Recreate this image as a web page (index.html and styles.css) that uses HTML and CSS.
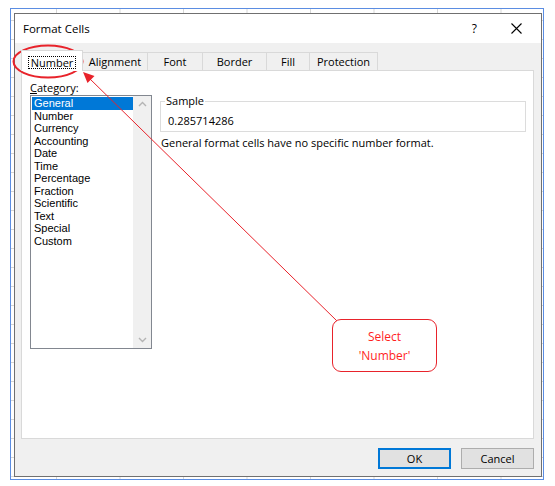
FILE: index.html
```html
<!DOCTYPE html>
<html>
<head>
<meta charset="utf-8">
<link rel="stylesheet" href="styles.css">
</head>
<body>
<div class="frame">
  <div class="dialog">
    <div class="titlebar">
      <span class="title">Format Cells</span>
      <span class="help">?</span>
      <svg class="close" width="11" height="11" viewBox="0 0 11 11"><path d="M0.5 0.5L10.5 10.5M10.5 0.5L0.5 10.5" stroke="#000" stroke-width="1.1" fill="none"/></svg>
    </div>
    <div class="body">
      <div class="tabs">
        <div class="tab tab-number selected"><span class="focus">Number</span></div>
        <div class="tab tab-align">Alignment</div>
        <div class="tab tab-font">Font</div>
        <div class="tab tab-border">Border</div>
        <div class="tab tab-fill">Fill</div>
        <div class="tab tab-prot">Protection</div>
      </div>
      <div class="panel">
        <div class="left">
          <div class="cat-label"><u>C</u>ategory:</div>
          <div class="listbox">
            <ul class="items">
              <li class="sel">General</li>
              <li>Number</li>
              <li>Currency</li>
              <li>Accounting</li>
              <li>Date</li>
              <li>Time</li>
              <li>Percentage</li>
              <li>Fraction</li>
              <li>Scientific</li>
              <li>Text</li>
              <li>Special</li>
              <li>Custom</li>
            </ul>
            <div class="scroll">
              <svg class="arrow" width="17" height="17" viewBox="0 0 17 17"><path d="M5 10L8.5 6.5L12 10" stroke="#b4b4b4" stroke-width="1.4" fill="none"/></svg>
              <svg class="arrow" width="17" height="17" viewBox="0 0 17 17"><path d="M5 7L8.5 10.5L12 7" stroke="#b4b4b4" stroke-width="1.4" fill="none"/></svg>
            </div>
          </div>
        </div>
        <div class="right">
          <fieldset class="sample">
            <legend>Sample</legend>
            <div class="sample-val">0.285714286</div>
          </fieldset>
          <p class="desc">General format cells have no specific number format.</p>
        </div>
      </div>
      <div class="buttons">
        <button class="btn default">OK</button>
        <button class="btn">Cancel</button>
      </div>
    </div>
  </div>
</div>
<svg class="annot" width="555" height="486" viewBox="0 0 555 486">
  <ellipse cx="48" cy="61.5" rx="34.5" ry="16" fill="none" stroke="#e8232b" stroke-width="2"/>
  <line x1="337" y1="321" x2="88" y2="77" stroke="#e8232b" stroke-width="1"/>
  <polygon points="83,72 94.5,76 87.5,83" fill="#e8232b"/>
</svg>
<div class="callout">
  <span>Select</span>
  <span>'Number'</span>
</div>
</body>
</html>
```

FILE: styles.css
```css
html, body {
  margin: 0;
  padding: 0;
}
body {
  width: 555px;
  height: 486px;
  overflow: hidden;
  background: #ffffff;
  position: relative;
  padding: 8px 0 0 10px;
  box-sizing: border-box;
  font-family: "Open Sans", "Noto Sans", sans-serif;
  font-size: 11px;
  color: #000;
}
.frame {
  width: 534px;
  height: 472px;
  box-sizing: border-box;
  border: 1px solid #5b8de2;
  padding: 4px 0 0 3px;
  background-color: #ffffff;
  background-image:
    linear-gradient(to right, #d6d6d6 1px, transparent 1px),
    linear-gradient(to bottom, #d6d6d6 1px, transparent 1px);
  background-size: 63.5px 100%, 100% 19px;
  background-position: 45px 0, 0 11px;
}
.dialog {
  width: 528px;
  height: 464px;
  box-sizing: border-box;
  border: 1px solid #707070;
  display: flex;
  flex-direction: column;
  background: #f0f0f0;
}
.titlebar {
  height: 29px;
  flex: 0 0 auto;
  background: #ffffff;
  display: flex;
  align-items: center;
  padding: 0 19px 0 8px;
}
.title {
  font-size: 11.5px;
  line-height: 14px;
}
.help {
  margin-left: auto;
  font-size: 12px;
  line-height: 14px;
  margin-right: 34px;
}
.close {
  display: block;
}
.body {
  flex: 1 1 auto;
  padding: 7px 7px 0 6px;
  display: flex;
  flex-direction: column;
}
.tabs {
  display: flex;
  align-items: flex-end;
  height: 21px;
  margin-bottom: -1px;
}
.tab {
  height: 18px;
  margin-bottom: 1px;
  box-sizing: border-box;
  border: 1px solid #d9d9d9;
  border-bottom: none;
  border-left: none;
  background: #f0f0f0;
  display: flex;
  align-items: center;
  justify-content: center;
  line-height: 14px;
}
.tab.selected {
  height: 21px;
  margin-bottom: 0;
  background: #ffffff;
  border-left: 1px solid #d9d9d9;
  position: relative;
  z-index: 1;
  align-items: flex-start;
  padding-top: 5px;
}
.focus {
  border: 1px dotted #000;
  padding: 0 2px;
  line-height: 11px;
}
.tab-number { width: 62px; }
.tab-align { width: 65px; }
.tab-font { width: 55px; }
.tab-border { width: 64px; }
.tab-fill { width: 43px; }
.tab-prot { width: 68px; }
.panel {
  width: 513px;
  height: 369px;
  box-sizing: border-box;
  flex: 0 0 auto;
  background: #ffffff;
  border: 1px solid #d9d9d9;
  display: flex;
  padding: 9px 7px 0 8px;
}
.left {
  flex: 0 0 auto;
}
.cat-label {
  line-height: 15px;
}
.cat-label u {
  text-decoration: underline;
  text-underline-offset: 1px;
}
.listbox {
  width: 122px;
  height: 254px;
  box-sizing: border-box;
  border: 1px solid #828790;
  display: flex;
}
.items {
  list-style: none;
  margin: 0;
  padding: 1px 0 0 1px;
  flex: 1 1 auto;
  font-family: "Liberation Sans", Arial, sans-serif;
  font-size: 11px;
}
.items li {
  line-height: 12.5px;
  height: 12.5px;
  padding-left: 2px;
}
.items li.sel {
  background: #0078d7;
  color: #ffffff;
}
.scroll {
  width: 18px;
  background: #f0f0f0;
  display: flex;
  flex-direction: column;
  justify-content: space-between;
  align-items: center;
}
.arrow {
  display: block;
}
.right {
  flex: 1 1 auto;
  margin-left: 8px;
}
.sample {
  margin: 14px 0 0 0;
  border: 1px solid #dcdcdc;
  padding: 0 0 3px 4px;
}
.sample legend {
  padding: 0 1px;
  line-height: 14px;
}
.sample-val {
  margin-top: 6px;
  line-height: 14px;
  padding-left: 3px;
}
.desc {
  margin: 4px 0 0 1px;
  line-height: 14px;
}
.buttons {
  display: flex;
  justify-content: flex-end;
  gap: 10px;
  margin-top: 9px;
}
.btn {
  width: 73px;
  height: 21px;
  box-sizing: border-box;
  border: 1px solid #adadad;
  background: #e1e1e1;
  font-family: "Open Sans", "Noto Sans", sans-serif;
  font-size: 11px;
  color: #000;
  padding: 0;
  margin: 0;
}
.btn.default {
  border: 1px solid #0078d7;
  box-shadow: inset 0 0 0 1px #0078d7;
}
.annot {
  position: absolute;
  left: 0;
  top: 0;
  pointer-events: none;
}
.callout {
  position: absolute;
  left: 332px;
  top: 319px;
  width: 105px;
  height: 53px;
  box-sizing: border-box;
  border: 1.3px solid #e8232b;
  border-radius: 9px;
  background: #ffffff;
  color: #ff1f1f;
  font-family: "Open Sans", sans-serif;
  font-size: 12px;
  line-height: 19px;
  display: flex;
  flex-direction: column;
  align-items: center;
  justify-content: center;
}
```
